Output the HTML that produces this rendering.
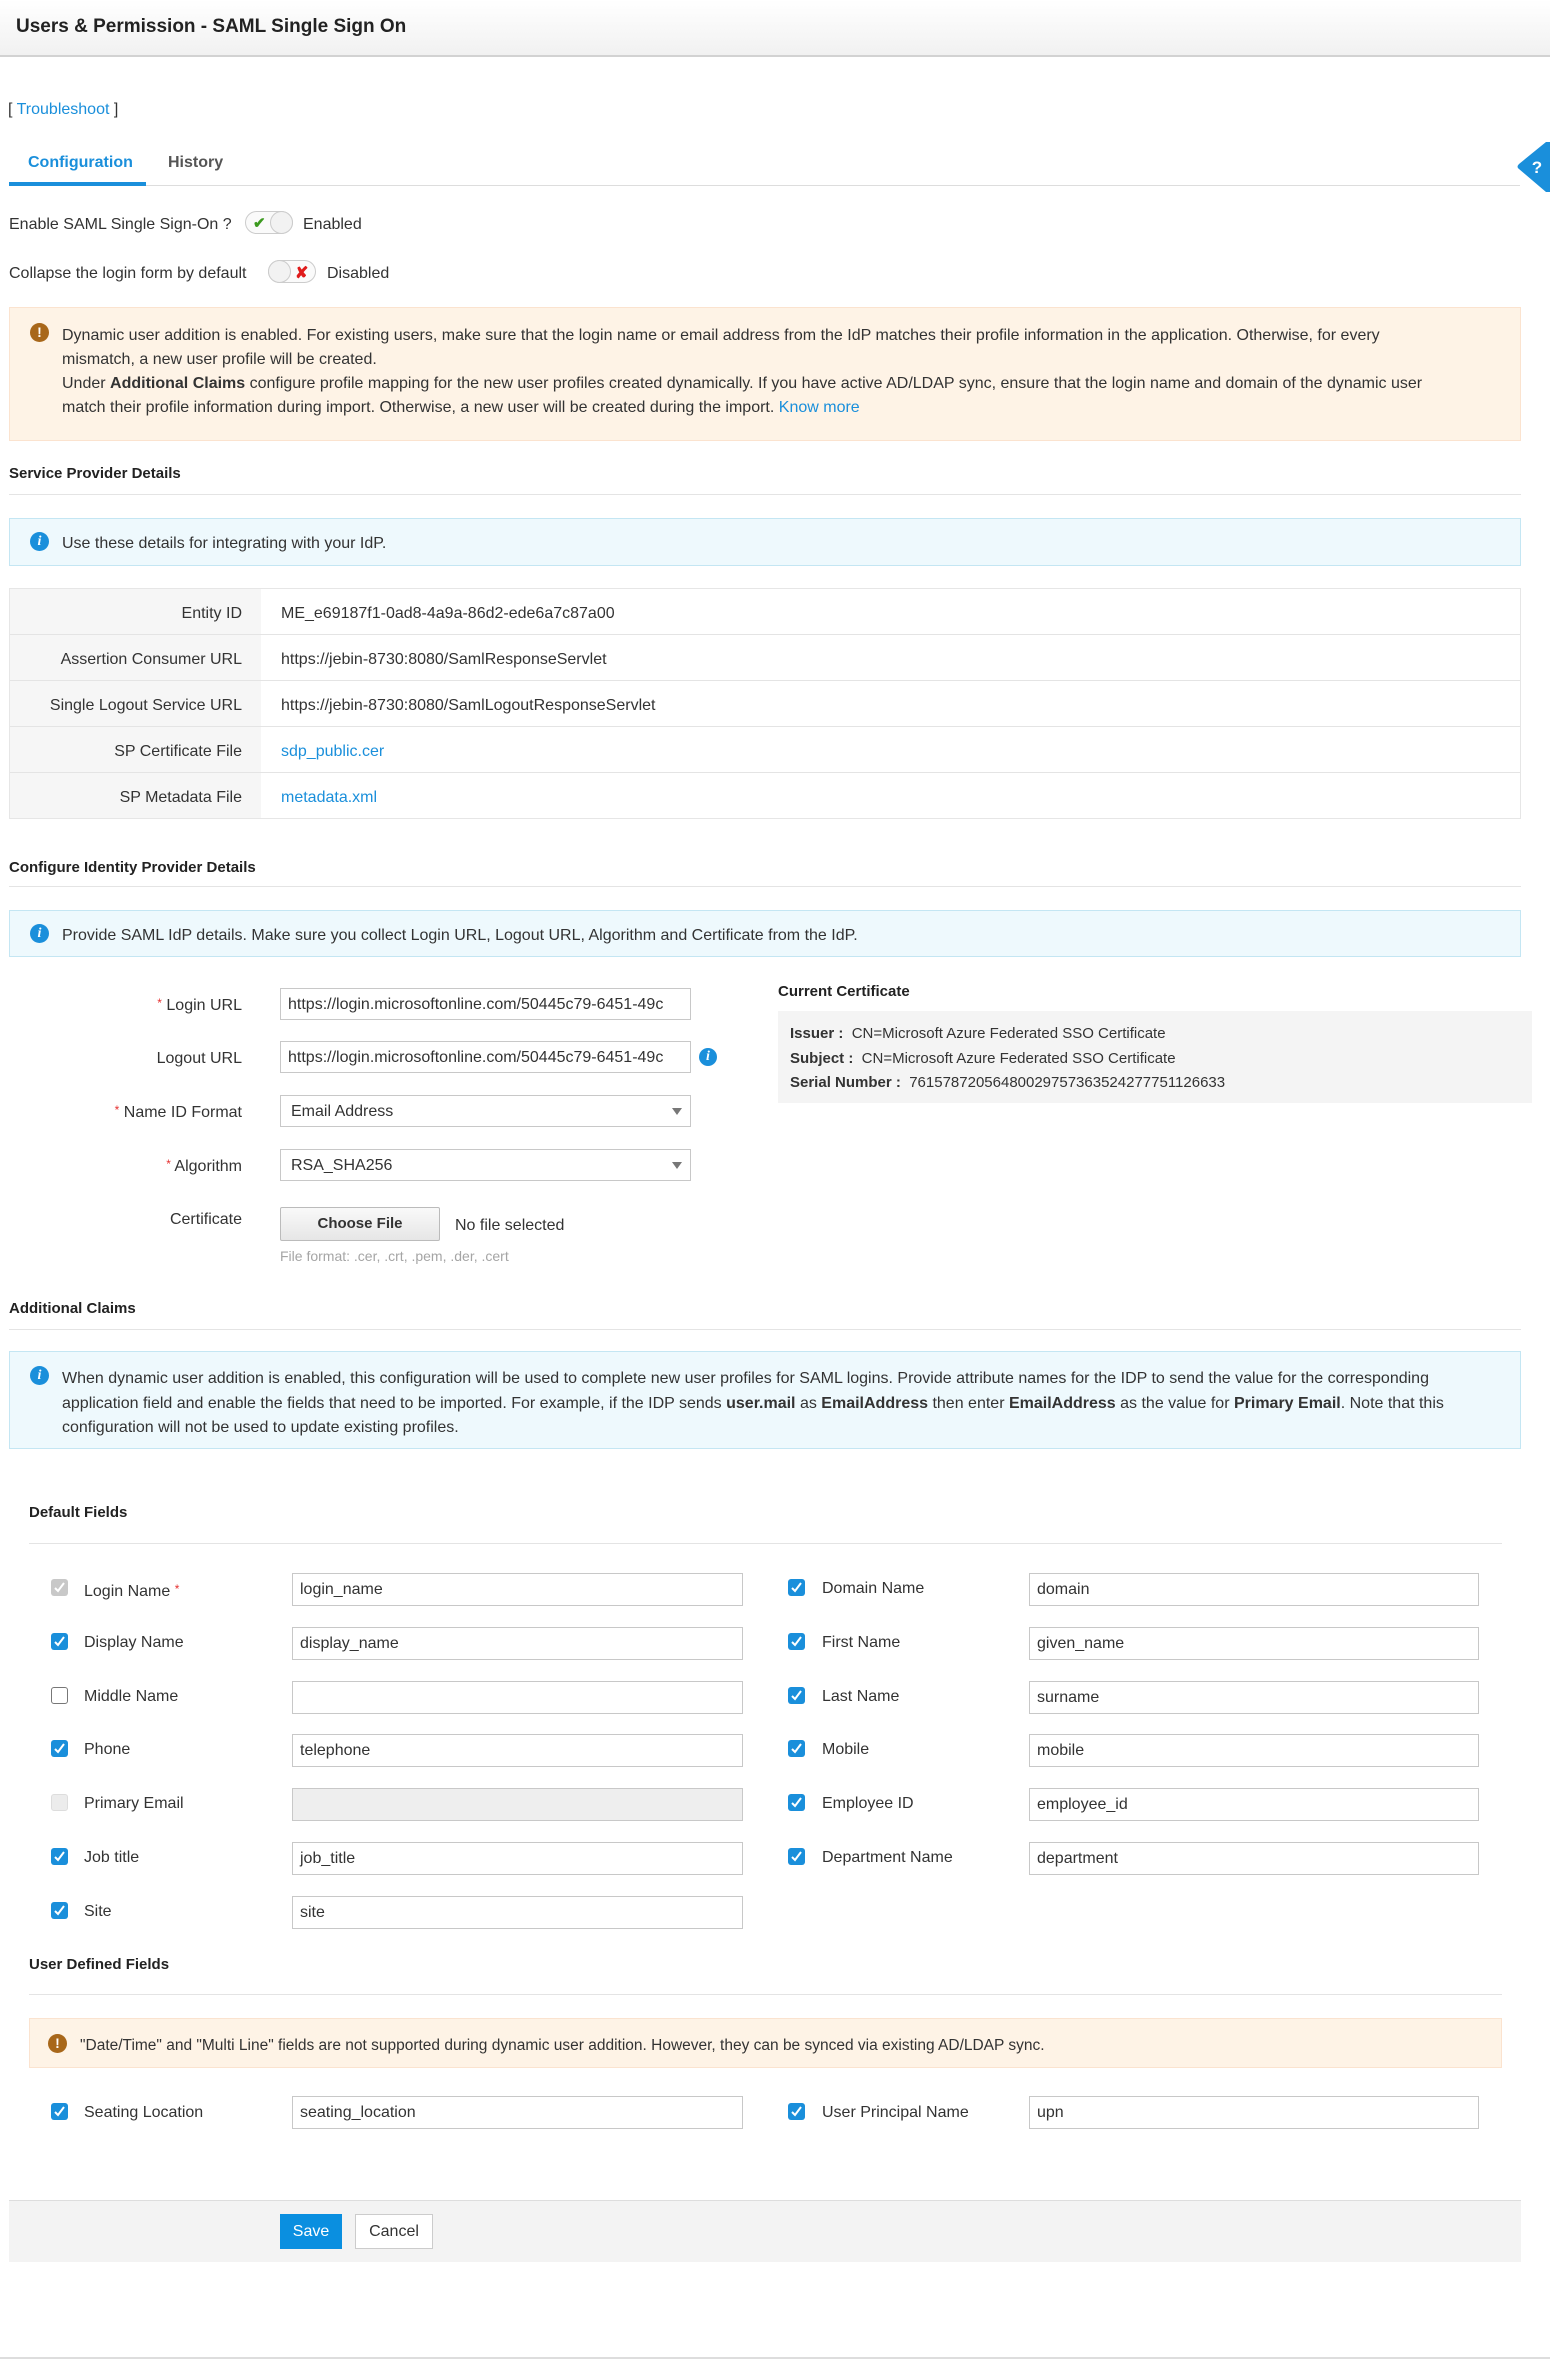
<!DOCTYPE html>
<html><head><meta charset="utf-8">
<style>
*{box-sizing:border-box;margin:0;padding:0}
body{width:1550px;height:2359px;position:relative;font-family:"Liberation Sans",Arial,sans-serif;font-size:16px;color:#333;background:#fff;overflow:hidden}
.a{position:absolute;white-space:nowrap;padding-top:3px}
.lnk{color:#1a8fdb}
.hdr{position:absolute;left:0;top:0;width:1550px;height:57px;background:linear-gradient(#fff,#f1f1f1);border-bottom:2px solid #d2d2d2}
.line{position:absolute;height:1px;background:#e4e4e4}
.h{font-weight:bold;font-size:15px;color:#222}
.warn{position:absolute;background:#fef3e6;border:1px solid #fbe3cf}
.info{position:absolute;background:#eef9fd;border:1px solid #c4e6f3}
.inp{position:absolute;height:33px;border:1px solid #c8c8c8;background:#fff;padding:0 7px;line-height:31px;font-size:16px;overflow:hidden;white-space:nowrap;color:#333}
.cb{position:absolute;width:17px;height:17px;border-radius:3px;background:#1a8fdb}
.cb svg{position:absolute;left:2px;top:2px}
.cb.off{background:#fff;border:1px solid #777}
.cb.dis{background:#ececec;border:1px solid #ddd}
.cb.gray{background:#c8c8c8}
.lbl{position:absolute;white-space:nowrap;line-height:20px}
.rl{position:absolute;right:1308px;white-space:nowrap;text-align:right;padding-top:3px}
.star{color:#e53030;font-size:12px;vertical-align:3px}
.ico{position:absolute;width:19px;height:19px;border-radius:50%;color:#fff;text-align:center;font-weight:bold;font-size:14px;line-height:19px}
</style></head><body>
<div class="hdr"></div>
<div class="a" style="left:16px;top:13px;font-size:19px;font-weight:bold;color:#222">Users &amp; Permission - SAML Single Sign On</div>

<div class="a" style="left:8px;top:98px;font-size:16px">[ <span class="lnk">Troubleshoot</span> ]</div>

<div class="a" style="left:28px;top:151px;font-size:16px;font-weight:bold;color:#1a8fdb">Configuration</div>
<div class="a" style="left:168px;top:151px;font-size:16px;font-weight:bold;color:#555">History</div>
<div class="line" style="left:9px;top:185px;width:1511px;background:#ddd"></div>
<div class="a" style="left:9px;top:182px;width:137px;height:4px;background:#1a8fdb;padding:0"></div>
<svg style="position:absolute;left:1516px;top:142px" width="34" height="50" viewBox="0 0 34 50"><path d="M34 0 L34 50 L30 50 L3 27 Q0 25 3 22 L30 0Z" fill="#1a8fdb"/><text x="21" y="31" fill="#fff" font-size="17" font-weight="bold" font-family="Liberation Sans" text-anchor="middle">?</text></svg>

<div class="a" style="left:9px;top:213px">Enable SAML Single Sign-On ?</div>
<div class="a" style="left:245px;top:211px;width:48px;height:23px;border:1px solid #ccc;border-radius:12px;background:#fafafa"></div>
<div class="a" style="left:253px;top:211px;color:#3c9a1f;font-size:15px;font-weight:bold">✔</div>
<div class="a" style="left:270px;top:211px;width:23px;height:23px;border:1px solid #ccc;border-radius:50%;background:#f2f2f2"></div>
<div class="a" style="left:303px;top:213px">Enabled</div>

<div class="a" style="left:9px;top:262px">Collapse the login form by default</div>
<div class="a" style="left:268px;top:260px;width:48px;height:23px;border:1px solid #ccc;border-radius:12px;background:#fafafa"></div>
<div class="a" style="left:268px;top:260px;width:23px;height:23px;border:1px solid #ccc;border-radius:50%;background:#f2f2f2"></div>
<div class="a" style="left:295px;top:260px;color:#e01b1b;font-size:16px;font-weight:bold">✘</div>
<div class="a" style="left:327px;top:262px">Disabled</div>

<div class="warn" style="left:9px;top:307px;width:1512px;height:134px"></div>
<div class="ico" style="left:30px;top:323px;background:#a8671a">!</div>
<div class="a" style="left:62px;top:321px;line-height:24px">Dynamic user addition is enabled. For existing users, make sure that the login name or email address from the IdP matches their profile information in the application. Otherwise, for every<br>mismatch, a new user profile will be created.<br>Under <b>Additional Claims</b> configure profile mapping for the new user profiles created dynamically. If you have active AD/LDAP sync, ensure that the login name and domain of the dynamic user<br>match their profile information during import. Otherwise, a new user will be created during the import. <span class="lnk">Know more</span></div>

<div class="a h" style="left:9px;top:462px">Service Provider Details</div>
<div class="line" style="left:9px;top:494px;width:1512px"></div>
<div class="info" style="left:9px;top:518px;width:1512px;height:48px"></div>
<div class="ico" style="left:30px;top:532px;background:#1a8fdb;font-style:italic;font-family:'Liberation Serif',serif">i</div>
<div class="a" style="left:62px;top:532px">Use these details for integrating with your IdP.</div>

<div class="a" style="left:9px;top:588px;width:1512px;height:231px;border:1px solid #e6e6e6;padding:0"></div>
<div class="a" style="left:10px;top:589px;width:251px;height:229px;background:#f6f6f6;padding:0"></div>
<div class="line" style="left:10px;top:634px;width:1510px"></div>
<div class="line" style="left:10px;top:680px;width:1510px"></div>
<div class="line" style="left:10px;top:726px;width:1510px"></div>
<div class="line" style="left:10px;top:772px;width:1510px"></div>
<div class="rl" style="top:602px">Entity ID</div><div class="a" style="left:281px;top:602px">ME_e69187f1-0ad8-4a9a-86d2-ede6a7c87a00</div>
<div class="rl" style="top:648px">Assertion Consumer URL</div><div class="a" style="left:281px;top:648px">https://jebin-8730:8080/SamlResponseServlet</div>
<div class="rl" style="top:694px">Single Logout Service URL</div><div class="a" style="left:281px;top:694px">https://jebin-8730:8080/SamlLogoutResponseServlet</div>
<div class="rl" style="top:740px">SP Certificate File</div><div class="a lnk" style="left:281px;top:740px">sdp_public.cer</div>
<div class="rl" style="top:786px">SP Metadata File</div><div class="a lnk" style="left:281px;top:786px">metadata.xml</div>

<div class="a h" style="left:9px;top:856px">Configure Identity Provider Details</div>
<div class="line" style="left:9px;top:886px;width:1512px"></div>
<div class="info" style="left:9px;top:910px;width:1512px;height:47px"></div>
<div class="ico" style="left:30px;top:924px;background:#1a8fdb;font-style:italic;font-family:'Liberation Serif',serif">i</div>
<div class="a" style="left:62px;top:924px">Provide SAML IdP details. Make sure you collect Login URL, Logout URL, Algorithm and Certificate from the IdP.</div>

<div class="rl" style="top:993px"><span class="star">*</span> Login URL</div>
<div class="inp" style="left:280px;top:988px;width:411px;height:32px">https://login.microsoftonline.com/50445c79-6451-49c</div>
<div class="rl" style="top:1047px">Logout URL</div>
<div class="inp" style="left:280px;top:1041px;width:411px;height:32px">https://login.microsoftonline.com/50445c79-6451-49c</div>
<div class="ico" style="left:699px;top:1048px;width:18px;height:18px;line-height:18px;background:#1a8fdb;font-style:italic;font-family:'Liberation Serif',serif">i</div>
<div class="rl" style="top:1100px"><span class="star">*</span> Name ID Format</div>
<div class="inp" style="left:280px;top:1095px;width:411px;height:32px;padding-left:10px">Email Address</div>
<div class="a" style="left:672px;top:1108px;border:5px solid transparent;border-top:7px solid #777;padding:0"></div>
<div class="rl" style="top:1154px"><span class="star">*</span> Algorithm</div>
<div class="inp" style="left:280px;top:1149px;width:411px;height:32px;padding-left:10px">RSA_SHA256</div>
<div class="a" style="left:672px;top:1162px;border:5px solid transparent;border-top:7px solid #777;padding:0"></div>
<div class="rl" style="top:1208px">Certificate</div>
<div class="a" style="left:280px;top:1207px;width:160px;height:34px;border:1px solid #bbb;border-radius:2px;background:linear-gradient(#f9f9f9,#e6e6e6);text-align:center;line-height:32px;font-weight:bold;font-size:15px;color:#333;padding:0">Choose File</div>
<div class="a" style="left:455px;top:1214px">No file selected</div>
<div class="a" style="left:280px;top:1245px;font-size:14px;color:#a5a5a5">File format: .cer, .crt, .pem, .der, .cert</div>

<div class="a h" style="left:778px;top:980px">Current Certificate</div>
<div class="a" style="left:778px;top:1011px;width:754px;height:92px;background:#f4f4f4;padding:0"></div>
<div class="a" style="left:790px;top:1022px;font-size:15px"><b>Issuer :</b>&nbsp; CN=Microsoft Azure Federated SSO Certificate</div>
<div class="a" style="left:790px;top:1047px;font-size:15px"><b>Subject :</b>&nbsp; CN=Microsoft Azure Federated SSO Certificate</div>
<div class="a" style="left:790px;top:1071px;font-size:15px"><b>Serial Number :</b>&nbsp; 76157872056480029757363524277751126633</div>

<div class="a h" style="left:9px;top:1297px">Additional Claims</div>
<div class="line" style="left:9px;top:1329px;width:1512px"></div>
<div class="info" style="left:9px;top:1351px;width:1512px;height:98px"></div>
<div class="ico" style="left:30px;top:1366px;background:#1a8fdb;font-style:italic;font-family:'Liberation Serif',serif">i</div>
<div class="a" style="left:62px;top:1364px;line-height:24.5px;white-space:normal;width:1440px">When dynamic user addition is enabled, this configuration will be used to complete new user profiles for SAML logins. Provide attribute names for the IDP to send the value for the corresponding application field and enable the fields that need to be imported. For example, if the IDP sends <b>user.mail</b> as <b>EmailAddress</b> then enter <b>EmailAddress</b> as the value for <b>Primary Email</b>. Note that this configuration will not be used to update existing profiles.</div>

<div class="a h" style="left:29px;top:1501px">Default Fields</div>
<div class="line" style="left:29px;top:1543px;width:1473px"></div>

<div class="cb gray" style="left:51px;top:1579px"><svg width="13" height="13" viewBox="0 0 13 13"><path d="M2 7 L5 10 L11 2" stroke="#fff" stroke-width="2" fill="none"/></svg></div>
<div class="lbl" style="left:84px;top:1579px">Login Name <span class="star">*</span></div>
<div class="inp" style="left:292px;top:1573px;width:451px">login_name</div>

<div class="cb" style="left:51px;top:1633px"><svg width="13" height="13" viewBox="0 0 13 13"><path d="M2 7 L5 10 L11 2" stroke="#fff" stroke-width="2" fill="none"/></svg></div>
<div class="lbl" style="left:84px;top:1633px">Display Name</div>
<div class="inp" style="left:292px;top:1627px;width:451px">display_name</div>

<div class="cb off" style="left:51px;top:1687px"></div>
<div class="lbl" style="left:84px;top:1687px">Middle Name</div>
<div class="inp" style="left:292px;top:1681px;width:451px"></div>

<div class="cb" style="left:51px;top:1740px"><svg width="13" height="13" viewBox="0 0 13 13"><path d="M2 7 L5 10 L11 2" stroke="#fff" stroke-width="2" fill="none"/></svg></div>
<div class="lbl" style="left:84px;top:1740px">Phone</div>
<div class="inp" style="left:292px;top:1734px;width:451px">telephone</div>

<div class="cb dis" style="left:51px;top:1794px"></div>
<div class="lbl" style="left:84px;top:1794px">Primary Email</div>
<div class="inp" style="left:292px;top:1788px;width:451px;background:#eee"></div>

<div class="cb" style="left:51px;top:1848px"><svg width="13" height="13" viewBox="0 0 13 13"><path d="M2 7 L5 10 L11 2" stroke="#fff" stroke-width="2" fill="none"/></svg></div>
<div class="lbl" style="left:84px;top:1848px">Job title</div>
<div class="inp" style="left:292px;top:1842px;width:451px">job_title</div>

<div class="cb" style="left:51px;top:1902px"><svg width="13" height="13" viewBox="0 0 13 13"><path d="M2 7 L5 10 L11 2" stroke="#fff" stroke-width="2" fill="none"/></svg></div>
<div class="lbl" style="left:84px;top:1902px">Site</div>
<div class="inp" style="left:292px;top:1896px;width:451px">site</div>

<div class="cb" style="left:788px;top:1579px"><svg width="13" height="13" viewBox="0 0 13 13"><path d="M2 7 L5 10 L11 2" stroke="#fff" stroke-width="2" fill="none"/></svg></div>
<div class="lbl" style="left:822px;top:1579px">Domain Name</div>
<div class="inp" style="left:1029px;top:1573px;width:450px">domain</div>

<div class="cb" style="left:788px;top:1633px"><svg width="13" height="13" viewBox="0 0 13 13"><path d="M2 7 L5 10 L11 2" stroke="#fff" stroke-width="2" fill="none"/></svg></div>
<div class="lbl" style="left:822px;top:1633px">First Name</div>
<div class="inp" style="left:1029px;top:1627px;width:450px">given_name</div>

<div class="cb" style="left:788px;top:1687px"><svg width="13" height="13" viewBox="0 0 13 13"><path d="M2 7 L5 10 L11 2" stroke="#fff" stroke-width="2" fill="none"/></svg></div>
<div class="lbl" style="left:822px;top:1687px">Last Name</div>
<div class="inp" style="left:1029px;top:1681px;width:450px">surname</div>

<div class="cb" style="left:788px;top:1740px"><svg width="13" height="13" viewBox="0 0 13 13"><path d="M2 7 L5 10 L11 2" stroke="#fff" stroke-width="2" fill="none"/></svg></div>
<div class="lbl" style="left:822px;top:1740px">Mobile</div>
<div class="inp" style="left:1029px;top:1734px;width:450px">mobile</div>

<div class="cb" style="left:788px;top:1794px"><svg width="13" height="13" viewBox="0 0 13 13"><path d="M2 7 L5 10 L11 2" stroke="#fff" stroke-width="2" fill="none"/></svg></div>
<div class="lbl" style="left:822px;top:1794px">Employee ID</div>
<div class="inp" style="left:1029px;top:1788px;width:450px">employee_id</div>

<div class="cb" style="left:788px;top:1848px"><svg width="13" height="13" viewBox="0 0 13 13"><path d="M2 7 L5 10 L11 2" stroke="#fff" stroke-width="2" fill="none"/></svg></div>
<div class="lbl" style="left:822px;top:1848px">Department Name</div>
<div class="inp" style="left:1029px;top:1842px;width:450px">department</div>

<div class="a h" style="left:29px;top:1953px">User Defined Fields</div>
<div class="line" style="left:29px;top:1994px;width:1473px"></div>
<div class="warn" style="left:29px;top:2018px;width:1473px;height:50px"></div>
<div class="ico" style="left:48px;top:2034px;background:#a8671a">!</div>
<div class="a" style="left:80px;top:2034px;font-size:15.5px">"Date/Time" and "Multi Line" fields are not supported during dynamic user addition. However, they can be synced via existing AD/LDAP sync.</div>

<div class="cb" style="left:51px;top:2103px"><svg width="13" height="13" viewBox="0 0 13 13"><path d="M2 7 L5 10 L11 2" stroke="#fff" stroke-width="2" fill="none"/></svg></div>
<div class="lbl" style="left:84px;top:2103px">Seating Location</div>
<div class="inp" style="left:292px;top:2096px;width:451px">seating_location</div>
<div class="cb" style="left:788px;top:2103px"><svg width="13" height="13" viewBox="0 0 13 13"><path d="M2 7 L5 10 L11 2" stroke="#fff" stroke-width="2" fill="none"/></svg></div>
<div class="lbl" style="left:822px;top:2103px">User Principal Name</div>
<div class="inp" style="left:1029px;top:2096px;width:450px">upn</div>

<div class="a" style="left:9px;top:2200px;width:1512px;height:62px;background:#f3f3f3;border-top:1px solid #ddd;padding:0"></div>
<div class="a" style="left:280px;top:2214px;width:62px;height:35px;background:#0a8fe0;color:#fff;text-align:center;line-height:35px;font-size:16px;padding:0">Save</div>
<div class="a" style="left:355px;top:2214px;width:78px;height:35px;background:#fff;border:1px solid #ccc;text-align:center;line-height:33px;font-size:16px;padding:0">Cancel</div>

<div class="line" style="left:0;top:2357px;width:1550px;background:#ddd;height:2px"></div>
</body></html>
